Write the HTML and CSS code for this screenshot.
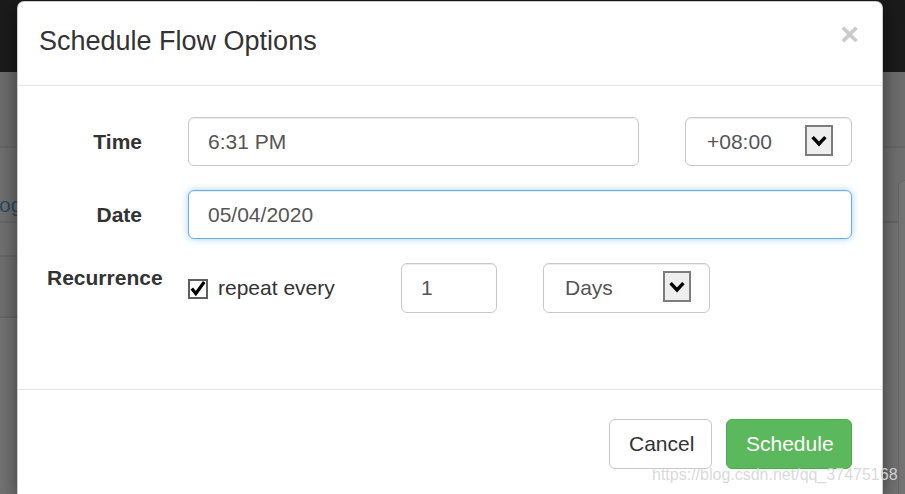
FILE: index.html
```html
<!DOCTYPE html>
<html>
<head>
<meta charset="utf-8">
<title>Schedule Flow Options</title>
<link rel="stylesheet" href="styles.css">
</head>
<body>
<div class="page">
  <div class="topbar"></div>
  <div class="bg-band band1"></div>
  <div class="bg-band band2"><span class="og">og</span></div>
  <div class="bg-band band3"></div>
  <div class="bg-band band4"></div>
  <div class="side-panel"></div>
</div>

<div class="modal">
  <div class="modal-header">
    <h4 class="modal-title">Schedule Flow Options</h4>
    <span class="close">×</span>
  </div>
  <div class="modal-body">
    <div class="form-row">
      <label class="ctl-label">Time</label>
      <div class="time-line">
        <div class="input">6:31 PM</div>
        <div class="input select">+08:00<span class="arrow"><svg width="16" height="12" viewBox="0 0 16 12"><path d="M1.6 2.2 L8 9 L14.4 2.2" fill="none" stroke="#000" stroke-width="3.4"/></svg></span></div>
      </div>
    </div>
    <div class="form-row">
      <label class="ctl-label">Date</label>
      <div class="input focus">05/04/2020</div>
    </div>
    <div class="form-row last">
      <label class="ctl-label rec">Recurrence</label>
      <div class="rec-line">
        <div class="check"><svg width="20" height="20" viewBox="0 0 20 20"><rect x="1" y="1" width="18" height="18" fill="#fff" stroke="#5f5f5f" stroke-width="2"/><path d="M3.8 9.6 L7.8 14.6 L16.2 3" fill="none" stroke="#000" stroke-width="3.2"/></svg><span>repeat every</span></div>
        <div class="input num">1</div>
        <div class="input select days">Days<span class="arrow"><svg width="16" height="12" viewBox="0 0 16 12"><path d="M1.6 2.2 L8 9 L14.4 2.2" fill="none" stroke="#000" stroke-width="3.4"/></svg></span></div>
      </div>
    </div>
  </div>
  <div class="modal-footer">
    <button class="btn btn-default">Cancel</button>
    <button class="btn btn-success">Schedule</button>
  </div>
</div>

<div class="watermark">https://blog.csdn.net/qq_37475168</div>
</body>
</html>
```

FILE: styles.css
```css
* { box-sizing: border-box; }
html, body { margin: 0; padding: 0; }
body {
  width: 905px;
  height: 494px;
  overflow: hidden;
  background: #737373;
  font-family: "Liberation Sans", Arial, sans-serif;
  position: relative;
}

/* background page behind the backdrop */
.page { position: relative; height: 494px; overflow: hidden; }
.topbar { height: 72px; background: #1b1b1b; }
.bg-band { border-bottom: 2px solid #676767; }
.band1 { height: 76px; background: #6d6d6d; }
.band2 { height: 75px; background: #707070; overflow: hidden; }
.band3 { height: 34px; background: #717171; width: 30px; }
.band4 { height: 61px; background: #6f6f6f; width: 30px; }
.og {
  display: block;
  margin-left: -1px;
  padding-top: 46px;
  font-size: 21px;
  line-height: 21px;
  color: #2c4865;
}
.side-panel {
  position: absolute;
  left: 898px;
  top: 180px;
  width: 40px;
  height: 330px;
  border: 1px solid #666;
  border-radius: 6px 0 0 0;
  background: #747474;
}

/* modal */
.modal {
  position: absolute;
  left: 17px;
  top: 1px;
  width: 866px;
  height: 493px;
  overflow: hidden;
  background: #fff;
  border: 1px solid rgba(0,0,0,.2);
  border-bottom: 0;
  border-radius: 7px 7px 0 0;
  box-shadow: 0 6px 20px rgba(0,0,0,.5);
}
.modal-header {
  display: flex;
  align-items: flex-start;
  height: 84px;
  padding: 26px 23px 0 21px;
  border-bottom: 1px solid #e5e5e5;
}
.modal-title {
  margin: 0;
  font-size: 27px;
  line-height: 27px;
  font-weight: normal;
  color: #333;
}
.close {
  margin-left: auto;
  margin-top: -10px;
  font-size: 32px;
  line-height: 32px;
  font-weight: bold;
  color: #cbcbcb;
}

.modal-body {
  padding: 31px 30px 76px 21px;
  display: flex;
  flex-direction: column;
  gap: 24px;
}
.form-row {
  display: grid;
  grid-template-columns: 149px 1fr;
  align-items: center;
}
.ctl-label {
  text-align: right;
  padding-right: 46px;
  font-weight: bold;
  font-size: 21px;
  color: #333;
}
.ctl-label.rec {
  text-align: left;
  padding-left: 8px;
  padding-right: 0;
  align-self: start;
  line-height: 30px;
  white-space: nowrap;
}

.input {
  display: flex;
  align-items: center;
  height: 49px;
  padding-left: 19px;
  border: 1px solid #c8c8c8;
  border-radius: 6px;
  font-size: 21px;
  color: #555;
  background: #fff;
  box-shadow: inset 0 1px 1px rgba(0,0,0,.075);
}
.input.focus {
  border-color: #66afe9;
  box-shadow: inset 0 1px 1px rgba(0,0,0,.075), 0 0 7px rgba(102,175,233,.6);
}
.time-line {
  display: grid;
  grid-template-columns: 451px 167px;
  column-gap: 46px;
}
.select {
  position: relative;
  padding-left: 21px;
}
.arrow {
  position: absolute;
  right: 18px;
  top: 7px;
  width: 28px;
  height: 31px;
  background: #eeeeee;
  border: 2px solid #7d7d7d;
  display: flex;
  align-items: center;
  justify-content: center;
}
.arrow svg { display: block; }

.rec-line {
  display: flex;
  align-items: center;
}
.rec-line .input { height: 50px; flex: none; }
.check {
  width: 213px;
  flex: none;
  display: flex;
  align-items: center;
  gap: 10px;
  font-size: 21px;
  color: #333;
}
.check svg { display: block; margin-top: 2px; }
.rec-line .num { width: 96px; }
.rec-line .days { width: 167px; margin-left: 46px; }

.modal-footer {
  display: flex;
  justify-content: flex-end;
  gap: 14px;
  padding: 29px 30px 0 0;
  border-top: 1px solid #e5e5e5;
}
.btn {
  height: 50px;
  padding: 0 19px;
  font-family: "Liberation Sans", Arial, sans-serif;
  font-size: 21px;
  border-radius: 6px;
  border: 1px solid #c8c8c8;
  background: #fff;
  color: #333;
}
.btn-default { width: 103px; }
.btn-success {
  width: 126px;
  background: #5cb85c;
  border-color: #4cae4c;
  color: #fff;
}

.watermark {
  position: absolute;
  left: 652px;
  top: 466px;
  font-size: 16px;
  line-height: 18px;
  color: rgba(215,215,215,.95);
  white-space: nowrap;
}
```
